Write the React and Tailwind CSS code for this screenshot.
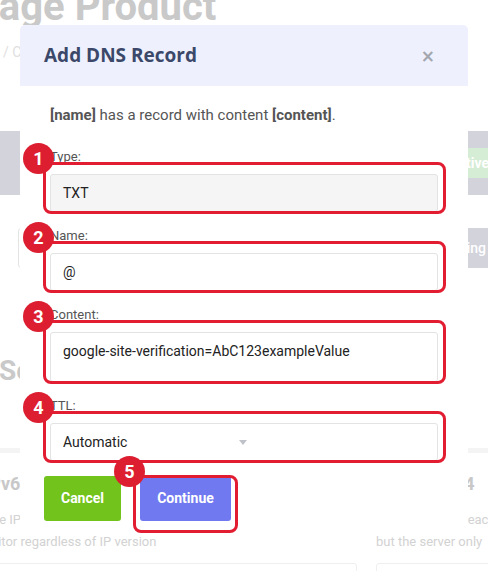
const Badge = ({ n, className }) => (
  <div
    className={
      "absolute z-20 w-[31px] h-[31px] rounded-full bg-[#dc1e30] text-white font-bold text-[18px] leading-[31px] text-center font-['Roboto',sans-serif] " +
      className
    }
  >
    {n}
  </div>
);

const Highlight = ({ className }) => (
  <div className={"absolute z-10 border-[3px] border-[#e21c31] rounded-[8px] pointer-events-none " + className} />
);

const Field = ({ n, label, children, className = "" }) => (
  <div className={"relative " + className}>
    <div className="h-[18px] text-[13px] leading-[18px] text-[#555]">{label}</div>
    <div className="mt-[8px]">{children}</div>
    <Highlight className="top-[14px] bottom-[-2px] left-[-7px] right-[-8px]" />
    <Badge n={n} className="top-[-5px] left-[-27px]" />
  </div>
);

export default function App() {
  return (
    <div className="relative w-[488px] h-[571px] overflow-hidden bg-white font-['Roboto',sans-serif]">
      {/* dimmed page behind the dialog */}
      <div className="flex flex-col">
        <h1 className="ml-[-80px] mt-[-13px] h-[40px] text-[40px] leading-[40px] font-bold text-[#c9c9c9] whitespace-nowrap">
          Manage Product
        </h1>
        <div className="mt-[15px] ml-[3px] text-[14px] leading-[20px] text-[#e0e0e0] whitespace-nowrap">/ Client Area</div>
        <div className="mt-[69px] h-[64px] bg-[#d2d3db] flex items-center justify-end">
          <span className="mr-[-11px] h-[30px] px-[10px] rounded bg-[#d5ecd5] text-white font-bold text-[14px] leading-[30px]">
            Active
          </span>
        </div>
        <div className="mt-[33px] h-[40px] flex mr-[-10px]">
          <div className="ml-[18px] flex-1 border border-[#e4e4e4] rounded-l-[3px]" />
          <div className="px-[12px] bg-[#d2d3db] text-white text-[14px] leading-[40px] font-medium">Searching</div>
        </div>
        <div className="mt-[85px] ml-[-1px] h-[36px] text-[28px] leading-[36px] font-bold text-[#c9c9c9] whitespace-nowrap">
          Server Settings
        </div>
        <div className="mt-[59px] h-[5px] bg-[#f4f4f4]" />
        <div className="flex gap-[19px] ml-[-16px] mt-[19px] whitespace-nowrap">
          <div className="w-[373px] flex-none flex flex-col">
            <div className="h-[24px] text-[18px] leading-[24px] font-bold text-[#c8c8c8]">IPv6 Only</div>
            <div className="mt-[13px] text-[13px] leading-[22px] text-[#d2d2d2]">
              Use IPv6 for all traffic so the server is reachable by any
            </div>
            <div className="ml-[-2px] text-[13px] leading-[22px] text-[#d2d2d2]">visitor regardless of IP version</div>
            <div className="mt-[10px] h-[20px] border border-[#efefef] rounded-[3px]" />
          </div>
          <div className="w-[300px] flex-none flex flex-col">
            <div className="h-[24px] text-[18px] leading-[24px] font-bold text-[#c8c8c8]">IPv6 or IPv4</div>
            <div className="mt-[13px] text-[13px] leading-[22px] text-[#d2d2d2]">Reachable over each protocol,</div>
            <div className="text-[13px] leading-[22px] text-[#d2d2d2]">but the server only</div>
            <div className="mt-[10px] h-[20px] border border-[#efefef] rounded-[3px]" />
          </div>
        </div>
      </div>

      {/* dialog */}
      <div className="absolute left-[20px] top-[25px] w-[448px] h-[511px] bg-white rounded-[5px] flex flex-col z-30">
        <div className="h-[61px] flex-none bg-[#eef1fd] rounded-t-[5px] flex items-center justify-between pl-[24px] pr-[33px]">
          <div className="font-['Open_Sans',sans-serif] font-bold text-[19px] text-[#3b4869]">Add DNS Record</div>
          <div className="font-['DejaVu_Sans',sans-serif] font-bold text-[17px] leading-[20px] text-[#a3a6ae]">×</div>
        </div>
        <div className="px-[30px] pt-[19px] pb-[15px] flex flex-col">
          <div className="h-[20px] text-[15px] leading-[20px] text-[#555]">
            <span className="font-bold">[name]</span> has a record with content <span className="font-bold">[content]</span>.
          </div>

          <Field n="1" label="Type:" className="mt-[23px]">
            <div className="h-[38px] border border-[#e3e3e3] rounded-[3px] bg-[#f5f5f5] pl-[12px] flex items-center text-[14px] text-[#222]">
              TXT
            </div>
          </Field>

          <Field n="2" label="Name:" className="mt-[15px]">
            <div className="h-[38px] border border-[#e3e3e3] rounded-[3px] bg-white pl-[12px] flex items-center text-[14px] text-[#222]">
              @
            </div>
          </Field>

          <Field n="3" label="Content:" className="mt-[15px]">
            <div className="h-[50px] border border-[#e3e3e3] rounded-[3px] bg-white pl-[12px] pt-[9px] text-[14px] leading-[18px] text-[#222]">
              google-site-verification=AbC123exampleValue
            </div>
          </Field>

          <Field n="4" label="TTL:" className="mt-[15px]">
            <div className="h-[38px] border border-[#e3e3e3] rounded-[3px] bg-white pl-[12px] flex items-center text-[14px] text-[#222]">
              <div className="w-[184px] flex items-center justify-between">
                <span>Automatic</span>
                <svg width="8" height="5" viewBox="0 0 8 5">
                  <path d="M0 0 L8 0 L4 5 Z" fill="#bfc2c8" />
                </svg>
              </div>
            </div>
          </Field>

          <div className="mt-[15px] ml-[-6px] flex gap-[19px]">
            <button className="w-[77px] h-[45px] rounded-[3px] bg-[#72c31b] text-white font-bold text-[14px]">Cancel</button>
            <div className="relative">
              <button className="w-[91px] h-[45px] rounded-[3px] bg-[#7079f0] text-white font-bold text-[14px]">Continue</button>
              <Highlight className="top-[-1px] bottom-[-12px] left-[-7px] right-[-7px]" />
              <Badge n="5" className="top-[-20px] left-[-26px]" />
            </div>
          </div>
        </div>
      </div>
    </div>
  );
}
